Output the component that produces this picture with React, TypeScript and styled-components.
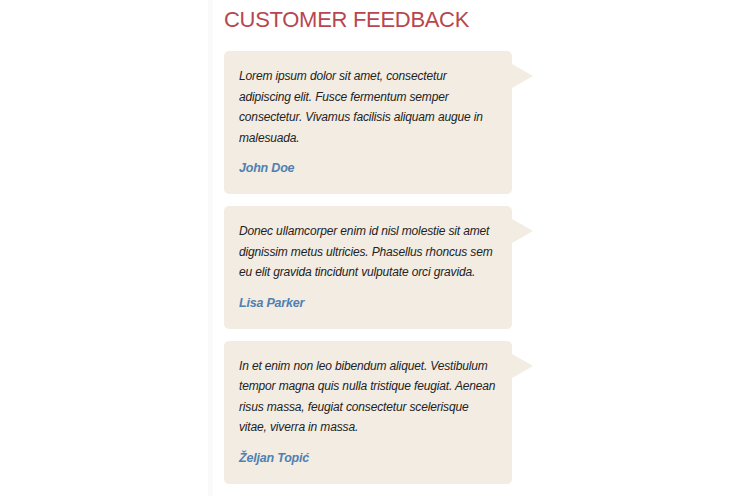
import * as React from 'react'
import styled, { createGlobalStyle } from 'styled-components'

interface Feedback {
  text: string
  author: string
}

const feedback: Feedback[] = [
  {
    text: 'Lorem ipsum dolor sit amet, consectetur adipiscing elit. Fusce fermentum semper consectetur. Vivamus facilisis aliquam augue in malesuada.',
    author: 'John Doe',
  },
  {
    text: 'Donec ullamcorper enim id nisl molestie sit amet dignissim metus ultricies. Phasellus rhoncus sem eu elit gravida tincidunt vulputate orci gravida.',
    author: 'Lisa Parker',
  },
  {
    text: 'In et enim non leo bibendum aliquet. Vestibulum tempor magna quis nulla tristique feugiat. Aenean risus massa, feugiat consectetur scelerisque vitae, viverra in massa.',
    author: 'Željan Topić',
  },
]

const App: React.FC = () => {
  return (
    <>
      <GlobalStyle />
      <Page>
        <Column>
          <Title>Customer Feedback</Title>
          <List>
            {feedback.map((item) => (
              <Bubble key={item.author}>
                <Quote>{item.text}</Quote>
                <Author>{item.author}</Author>
              </Bubble>
            ))}
          </List>
        </Column>
      </Page>
    </>
  )
}

const GlobalStyle = createGlobalStyle`
  html, body {
    margin: 0;
    padding: 0;
    background: #ffffff;
  }
  body {
    font-family: "Liberation Sans", Arial, sans-serif;
  }
`

const Page = styled.div`
  display: flex;
  width: 750px;
  height: 496px;
  overflow: hidden;
`

const Column = styled.div`
  margin-left: 208px;
  padding-left: 11px;
  width: 310px;
  border-left: 5px solid #fafafa;
`

const Title = styled.h2`
  margin: 0;
  padding-top: 7px;
  font-size: 22px;
  line-height: 26px;
  font-weight: normal;
  text-transform: uppercase;
  color: #b8464f;
  letter-spacing: -0.3px;
`

const List = styled.div`
  display: flex;
  flex-direction: column;
  gap: 12px;
  margin-top: 18px;
`

const Bubble = styled.div`
  position: relative;
  width: 288px;
  box-sizing: border-box;
  padding: 15px 15px 16px 15px;
  background: #f2ece3;
  border-radius: 5px;

  /* speech tail on the right */
  &::after {
    content: '';
    position: absolute;
    top: 13px;
    left: 100%;
    border-style: solid;
    border-width: 12px 0 12px 21px;
    border-color: transparent transparent transparent #f2ece3;
  }
`

const Quote = styled.p`
  margin: 0;
  font-size: 12px;
  line-height: 20.5px;
  font-style: italic;
  letter-spacing: -0.15px;
  color: #222222;
`

const Author = styled.div`
  margin-top: 10px;
  font-size: 12.5px;
  line-height: 20px;
  font-style: italic;
  font-weight: bold;
  letter-spacing: -0.2px;
  color: #4f80b2;
`

export default App
